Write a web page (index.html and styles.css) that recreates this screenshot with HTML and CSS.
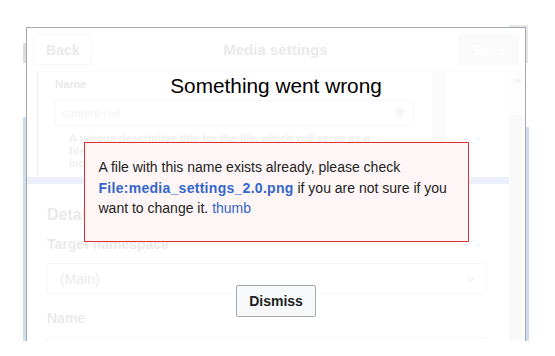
FILE: index.html
```html
<!DOCTYPE html>
<html>
	<head>
		<meta charset="UTF-8">
		<title>Media settings</title>
		<link rel="stylesheet" href="styles.css">
	</head>
	<body>
		<div class="screen">
			<!-- page behind the dialog -->
			<div class="behind">
				<div class="behind-row">
					<div class="mark-l"></div>
					<div class="mark-r"></div>
				</div>
				<div class="behind-band">
					<div class="band-l"></div>
					<div class="band-r"></div>
				</div>
			</div>

			<div class="dialog">
				<div class="dlg-head">
					<button class="btn btn-back">Back</button>
					<div class="dlg-title">Media settings</div>
					<button class="btn btn-primary" disabled>Save</button>
				</div>
				<div class="dlg-body">
					<div class="dlg-main">
						<div class="preview">
							<div class="preview-panel">
								<div class="preview-fields">
									<div class="small-label">Name</div>
									<div class="small-input">
										<span>content cell</span>
										<span class="req">*</span>
									</div>
									<div class="small-help">A unique descriptive title for the file, which will serve as a filename. You may use plain language with spaces. Do not include the file extension.</div>
								</div>
								<div class="preview-scroll"></div>
							</div>
						</div>
						<div class="band"></div>
						<div class="details">
							<h2>Details</h2>
							<div class="field-label">Target namespace</div>
							<div class="select">
								<span>(Main)</span>
								<svg width="10" height="6" viewBox="0 0 10 6"><path d="M1 1l4 4 4-4" fill="none" stroke="#72777d" stroke-width="1.5"/></svg>
							</div>
							<div class="field-label field-label-2">Name</div>
							<div class="input"></div>
						</div>
					</div>
					<div class="scrollbar">
						<svg class="arrow" width="9" height="6" viewBox="0 0 9 6"><path d="M1 5l3.5-3.5 3.5 3.5" fill="none" stroke="#505050" stroke-width="1.5"/></svg>
						<div class="thumb"></div>
					</div>
				</div>

				<!-- error layer -->
				<div class="errors">
					<div class="errors-title">Something went wrong</div>
					<div class="error-box">A file with this name exists already, please check <a href="#" class="file-link">File:media_settings_2.0.png</a> if you are not sure if you want to change it. <a href="#" class="plain-link">thumb</a></div>
					<button class="btn dismiss">Dismiss</button>
				</div>
			</div>
		</div>
	</body>
</html>
```

FILE: styles.css
```css
* {
	box-sizing: border-box;
}

body {
	margin: 0;
	background: #fff;
	color: #202122;
	font-family: "Liberation Sans", Arial, sans-serif;
}

.screen {
	position: relative;
	width: 555px;
	height: 341px;
	overflow: hidden;
}

/* page behind */
.behind {
	padding-top: 25px;
}

.behind-row {
	display: flex;
	justify-content: space-between;
	height: 92px;
	margin: 0 27px 0 23px;
}

.mark-l {
	width: 4px;
	height: 20px;
	margin-top: 18px;
	background: #dcdcdc;
}

.mark-r {
	width: 19px;
	height: 38px;
	background: #e6e6e6;
}

.behind-band {
	display: flex;
	justify-content: space-between;
	height: 224px;
	margin: 0 26px 0 23px;
}

.band-l,
.band-r {
	width: 4px;
	background: #cfdcf0;
}

.band-r {
	margin-top: 10px;
}

/* dialog */
.dialog {
	position: absolute;
	left: 26px;
	top: 27px;
	width: 500px;
	height: 330px;
	background: #fff;
	border: 1px solid #a2a9b1;
	overflow: hidden;
}

.dlg-head {
	display: grid;
	grid-template-columns: auto 1fr auto;
	align-items: center;
	height: 44px;
	padding: 0 6px;
	border-bottom: 1px solid #c8ccd1;
}

.btn {
	height: 31px;
	padding: 0 12px;
	border: 1px solid #a2a9b1;
	border-radius: 2px;
	background: #f8f9fa;
	color: #202122;
	font-family: "Liberation Sans", Arial, sans-serif;
	font-size: 14px;
	font-weight: bold;
}

.btn-primary {
	padding: 0 13px;
	background: #c8ccd1;
	border-color: #c8ccd1;
	color: #fff;
}

.dlg-title {
	text-align: center;
	font-size: 15px;
	font-weight: bold;
}

.dlg-body {
	display: flex;
	height: 285px;
}

.dlg-main {
	flex: 1;
}

.preview {
	height: 105px;
	padding-left: 10px;
}

.preview-panel {
	display: flex;
	width: 408px;
	height: 100%;
	border-left: 1px solid #72777d;
}

.preview-fields {
	flex: 1;
	padding: 6px 0 0 17px;
	font-size: 11.5px;
}

.small-label {
	font-weight: bold;
	line-height: 13px;
}

.small-input {
	display: flex;
	justify-content: space-between;
	align-items: center;
	width: 359px;
	height: 26px;
	margin-top: 9px;
	padding: 0 8px 0 6px;
	border: 1px solid #a2a9b1;
	border-radius: 2px;
	color: #72777d;
}

.req {
	font-size: 27px;
	line-height: 1;
	padding-top: 9px;
}

.small-help {
	width: 359px;
	margin-top: 6px;
	padding-left: 14px;
	font-size: 11px;
	font-weight: bold;
	line-height: 12.5px;
	color: #54595d;
}

.preview-scroll {
	width: 13px;
	background: #c8ccd1;
}

.band {
	height: 7px;
	background: #36c;
}

.details {
	padding: 22px 22px 0 20px;
}

.details h2 {
	margin: 0;
	font-size: 16px;
	line-height: 18px;
}

.field-label {
	margin-top: 12px;
	font-size: 14px;
	font-weight: bold;
	line-height: 16px;
}

.field-label-2 {
	margin-top: 16px;
}

.select {
	display: flex;
	justify-content: space-between;
	align-items: center;
	height: 31px;
	margin-top: 11px;
	padding: 0 10px 0 12px;
	border: 1px solid #a2a9b1;
	border-radius: 2px;
	font-size: 14px;
}

.input {
	height: 31px;
	margin-top: 11px;
	border: 1px solid #a2a9b1;
	border-radius: 2px;
}

.scrollbar {
	display: flex;
	flex-direction: column;
	align-items: center;
	width: 16px;
	background: #f1f1f1;
}

.arrow {
	margin-top: 6px;
}

.thumb {
	align-self: flex-start;
	width: 14px;
	flex: 1;
	margin-top: 31px;
	background: #c1c1c1;
}

/* error layer */
.errors {
	position: absolute;
	top: 0;
	left: 0;
	right: 0;
	bottom: 0;
	display: flex;
	flex-direction: column;
	align-items: center;
	padding-top: 46px;
	background: rgba(255, 255, 255, 0.9);
}

.errors-title {
	font-size: 20.8px;
	line-height: 24px;
	color: #000;
}

.error-box {
	width: 385px;
	margin-top: 44px;
	padding: 14px 14px 22px;
	border: 1px solid #d33;
	background: #fef6f6;
	font-size: 14px;
	line-height: 20.5px;
	color: #222;
}

.error-box a {
	color: #36c;
	text-decoration: none;
}

.file-link {
	font-weight: bold;
	letter-spacing: 0.28px;
}

.dismiss {
	width: 80px;
	height: 32px;
	margin-top: 43px;
	padding: 0;
}
```
